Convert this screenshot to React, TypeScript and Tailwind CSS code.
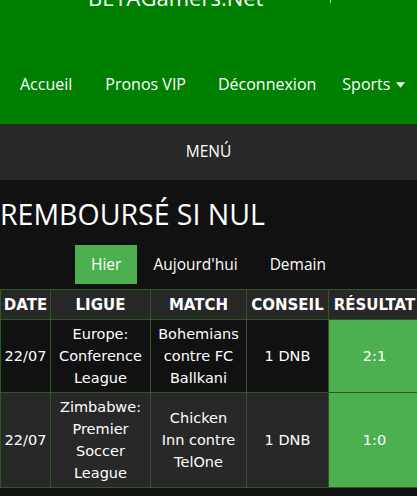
import React from "react";

type Row = {
  date: string;
  league: string;
  match: string;
  tip: string;
  result: string;
};

const rows: Row[] = [
  { date: "22/07", league: "Europe: Conference League", match: "Bohemians contre FC Ballkani", tip: "1 DNB", result: "2:1" },
  { date: "22/07", league: "Zimbabwe: Premier Soccer League", match: "Chicken Inn contre TelOne", tip: "1 DNB", result: "1:0" },
];

const tabs = ["Hier", "Aujourd'hui", "Demain"];

export default function App() {
  return (
    <div className="h-[496px] w-[417px] overflow-hidden bg-[#111111] font-['Open_Sans',sans-serif] text-white">
      {/* Header */}
      <header className="relative flex h-[124px] flex-col bg-[#008000]">
        <div className="-mt-[18px] h-[30px] pl-[88px] text-[22px] leading-[30px]">BETAGamers.Net</div>
        <span className="absolute left-[330px] top-0 h-[3px] w-px bg-white/70" />
        <nav className="mt-[49px] flex items-center text-[16px] leading-[22px]">
          <a className="ml-[20px] py-[12px]">Accueil</a>
          <a className="ml-[33px] py-[12px]">Pronos VIP</a>
          <a className="ml-[32px] py-[12px]">Déconnexion</a>
          <a className="ml-[26px] flex items-center gap-[6px] py-[12px]">
            Sports
            <svg width="9" height="6" viewBox="0 0 10 6" className="mt-[2px]">
              <path d="M0 0h10L5 6z" fill="white" />
            </svg>
          </a>
        </nav>
      </header>

      {/* Menu bar */}
      <div className="flex h-[56px] items-center justify-center bg-[#282828] text-[15.5px]">MENÚ</div>

      {/* Title */}
      <h1 className="mt-[14px] text-[28.5px] leading-[40px]">REMBOURSÉ SI NUL</h1>

      {/* Tabs */}
      <div className="mt-[11px] flex justify-center text-[15.5px]">
        {tabs.map((tab, i) => (
          <button
            key={tab}
            className={`h-[39px] px-[16px] ${i === 0 ? "bg-[#4CAF50]" : ""}`}
          >
            {tab}
          </button>
        ))}
      </div>

      {/* Table */}
      <table className="mt-[5px] w-[420px] table-fixed border-collapse font-['DejaVu_Sans',Verdana,sans-serif] text-[14.5px] leading-[22px]">
        <colgroup>
          <col className="w-[50px]" />
          <col className="w-[100px]" />
          <col className="w-[96px]" />
          <col className="w-[82px]" />
          <col className="w-[92px]" />
        </colgroup>
        <thead>
          <tr className="bg-[#282828]">
            {["DATE", "LIGUE", "MATCH", "CONSEIL", "RÉSULTAT"].map((h) => (
              <th
                key={h}
                className="h-[30px] border border-[#2b5a25] px-0 text-center text-[15px] font-bold whitespace-nowrap"
              >
                {h}
              </th>
            ))}
          </tr>
        </thead>
        <tbody>
          {rows.map((row, i) => (
            <tr key={i} className={i % 2 === 0 ? "bg-[#111111]" : "bg-[#282828]"}>
              <td className="border border-[#2b5a25] px-[2px] py-[3px] text-center">{row.date}</td>
              <td className="border border-[#2b5a25] px-[2px] py-[3px] text-center">{row.league}</td>
              <td className="border border-[#2b5a25] px-[6px] py-[3px] text-center">{row.match}</td>
              <td className="border border-[#2b5a25] px-[2px] py-[3px] text-center">{row.tip}</td>
              <td className="border border-[#2b5a25] bg-[#4CAF50] px-[2px] py-[3px] text-center">{row.result}</td>
            </tr>
          ))}
        </tbody>
      </table>
    </div>
  );
}
